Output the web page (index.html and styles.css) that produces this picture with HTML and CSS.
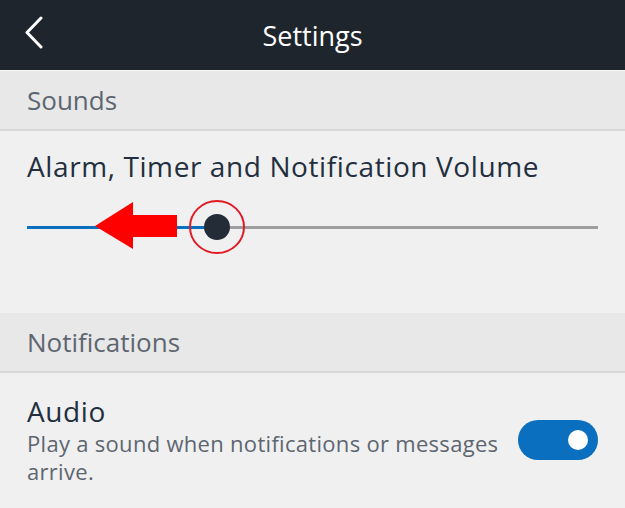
FILE: index.html
```html
<!DOCTYPE html>
<html lang="en">
<head>
  <meta charset="UTF-8">
  <meta name="viewport" content="width=device-width, initial-scale=1.0">
  <title>Settings</title>
  <link rel="stylesheet" href="styles.css">
</head>
<body>
  <div id="top-bar">
    <svg class="back" width="22" height="34" viewBox="0 0 22 34">
      <polyline points="19,2 5,16.5 19,31" fill="none" stroke="#fff" stroke-width="3" stroke-linecap="round" stroke-linejoin="round"/>
    </svg>
    <span class="title">Settings</span>
  </div>

  <div class="section-head">Sounds</div>
  <div class="volume">
    <div class="row-title">Alarm, Timer and Notification Volume</div>
    <div class="slider">
      <div class="slider-fill" style="width: 33.3%"></div>
      <div class="slider-thumb" style="left: 33.3%"></div>
      <!-- annotation: arrow + circle around the thumb -->
      <svg class="mark" width="180" height="60" viewBox="0 0 180 60">
        <polygon points="2,29 40,5 40,18 84,18 84,40 40,40 40,52" fill="#ff0000"/>
        <ellipse cx="124" cy="30" rx="27" ry="26" fill="none" stroke="#e01b24" stroke-width="2"/>
      </svg>
    </div>
  </div>

  <div class="section-head">Notifications</div>
  <div class="audio">
    <div class="audio-text">
      <div class="row-title">Audio</div>
      <div class="row-desc">Play a sound when notifications or messages arrive.</div>
    </div>
    <div class="toggle on"><span class="knob"></span></div>
  </div>
</body>
</html>
```

FILE: styles.css
```css
body {
  margin: 0;
  background-color: #f0f0f0;
  font-family: "Open Sans", sans-serif;
}
#top-bar {
  position: relative;
  height: 70px;
  background-color: #1f252d;
  border-bottom: 1px solid #f6f6f6;
  display: flex;
  align-items: center;
  justify-content: center;
}
#top-bar .title {
  color: #fff;
  font-size: 27px;
}
.back {
  position: absolute;
  left: 22px;
  top: 16px;
}
.section-head {
  height: 58px;
  background-color: #e8e8e8;
  border-bottom: 2px solid #d7d7d7;
  padding-left: 27px;
  display: flex;
  align-items: center;
  font-size: 26px;
  color: #5d6670;
}
.volume {
  height: 182px;
  box-sizing: border-box;
  padding: 17px 27px 0;
}
.row-title {
  font-size: 28px;
  letter-spacing: 0.6px;
  line-height: 36px;
  color: #232f3e;
}
.slider {
  position: relative;
  margin-top: 42px;
  height: 3px;
  background-color: #9e9e9e;
}
.slider-fill {
  height: 3px;
  background-color: #0b6fbf;
}
.slider-thumb {
  position: absolute;
  top: -12px;
  width: 26px;
  height: 26px;
  margin-left: -13px;
  border-radius: 50%;
  background-color: #242c37;
}
.mark {
  position: absolute;
  left: 66px;
  top: -29px;
}
.audio {
  display: flex;
  align-items: center;
  justify-content: space-between;
  padding: 20px 27px 0;
}
.audio-text {
  width: 480px;
}
.row-desc {
  font-size: 22px;
  letter-spacing: 0.3px;
  line-height: 28px;
  color: #5d6670;
}
.toggle {
  width: 80px;
  height: 40px;
  border-radius: 20px;
  background-color: #0b6fbf;
  display: flex;
  align-items: center;
  justify-content: flex-end;
  margin-top: 2px;
}
.knob {
  width: 20px;
  height: 20px;
  margin-right: 10px;
  border-radius: 50%;
  background-color: #fff;
}
```
